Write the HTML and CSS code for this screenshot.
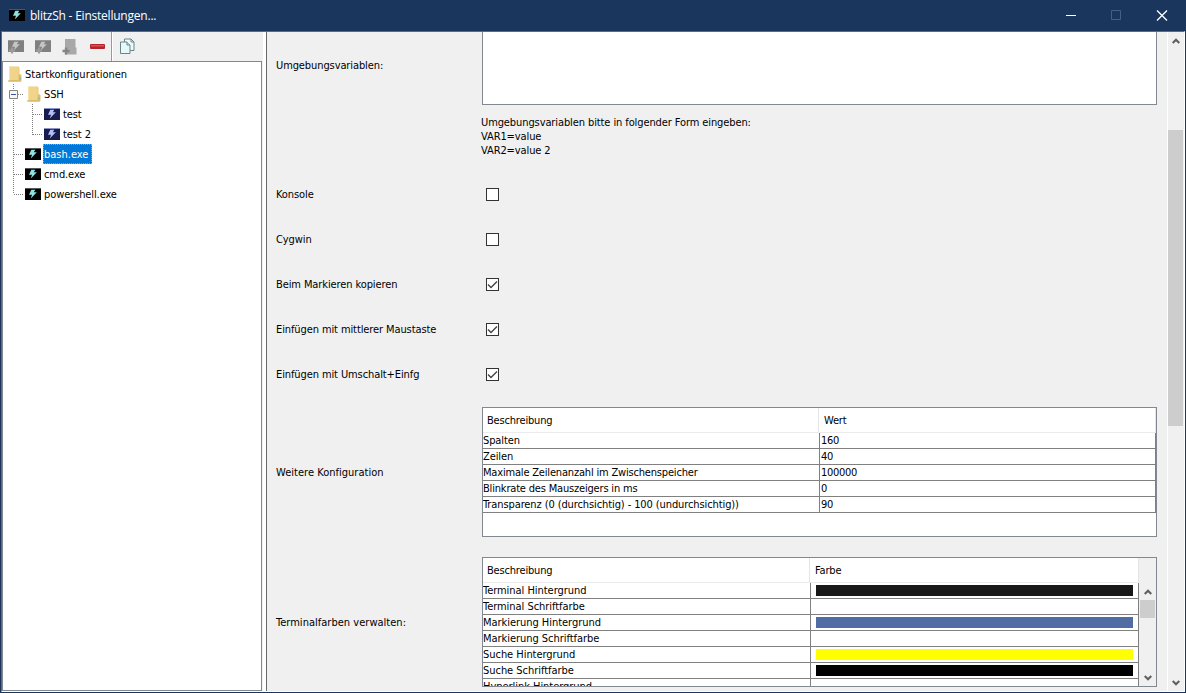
FILE: index.html
```html
<!DOCTYPE html>
<html lang="de">
<head>
<meta charset="utf-8">
<title>blitzSh - Einstellungen...</title>
<link rel="stylesheet" href="styles.css">
</head>
<body>
<svg class="defs" width="0" height="0">
  <symbol id="bolt" viewBox="0 0 16 12"><path d="M6.300 1.700h4L8.800 4.300h3L5.800 10.500l1.200-3.700H4z"/></symbol>
  <symbol id="term" viewBox="0 0 16 12"><rect width="16" height="12" fill="#000"/><rect width="16" height="1" fill="#555"/><use href="#bolt" width="16" height="12" fill="#8fe0e0"/></symbol>
  <symbol id="ssh" viewBox="0 0 16 12"><rect width="16" height="12" fill="#171c4c"/><rect width="16" height="1" fill="#8a94c8"/><use href="#bolt" width="16" height="12" fill="#b4c0f5"/></symbol>
  <symbol id="folder" viewBox="0 0 14 16"><path d="M1 .5h9.500l1 1V8l1.500 1v6.500H1z" fill="#e9c879"/><path d="M1 .5h1.500v14H1z" fill="#f7e2a9"/><path d="M3 1h7.500v13H3z" fill="#f0d48a"/><path d="M0 15.500h13V14.500H0z" fill="#d4ad55"/><path d="M10.500 9.500L12 8l1.500 1.500V15h-3z" fill="#dfbf70"/><path d="M11.500 11h1v3h-1z" fill="#55c7ea"/></symbol>
  <symbol id="addterm" viewBox="0 0 16 14"><rect width="16" height="12" fill="#808080"/><rect width="16" height="1" fill="#999"/><use href="#bolt" width="16" height="12" fill="#c5c5c5"/><path d="M4 7.500v6M1 10.500h6" stroke="#9c9c9c" stroke-width="2.200"/></symbol>
  <symbol id="up" viewBox="0 0 8 6"><path d="M.7 5L4 1.700 7.300 5" fill="none" stroke="#606060" stroke-width="2.200"/></symbol>
  <symbol id="down" viewBox="0 0 8 6"><path d="M.7 1L4 4.300 7.300 1" fill="none" stroke="#606060" stroke-width="2.200"/></symbol>
</svg>
<div class="window">
  <header class="titlebar">
    <svg class="appicon" width="16" height="12"><use href="#term"/></svg>
    <span class="title">blitzSh - Einstellungen...</span>
    <svg class="controls" width="102" height="11" viewBox="0 0 102 11" fill="none"><path d="M0 5.500h10" stroke="#fff"/><path d="M45.500 .5h9v9h-9z" stroke="#4a5f7e"/><path d="M91 .5l10 10M101 .5l-10 10" stroke="#fff" stroke-width="1.300"/></svg>
  </header>
  <div class="body">
    <aside class="side">
      <div class="toolbar">
        <svg width="16" height="14"><use href="#addterm"/></svg>
        <svg width="16" height="14"><use href="#addterm"/></svg>
        <svg width="16" height="16" viewBox="0 0 16 16"><path d="M3 0h10.500v8l1 1v6.500H3z" fill="#a8a8a8"/><path d="M4 8.500v7M.5 12h7" stroke="#858585" stroke-width="2.400"/></svg>
        <svg class="minus" width="15" height="5"><rect width="15" height="5" rx="1" fill="#b3262b"/><rect x="1" y="1" width="13" height="1.500" fill="#d85053"/></svg>
        <span class="sep"></span>
        <svg width="16" height="17" viewBox="0 0 16 17" stroke="#66858c"><path d="M5.500 1h6.500l3 3v8.500H5.500z" fill="#eefafa"/><path d="M12 1v3h3" fill="none"/><path d="M1.500 4H8l3 3v8.500H1.500z" fill="#e6f8f8"/><path d="M8 4v3h3" fill="#cfeaec"/></svg>
      </div>
      <div class="tree">
        <svg class="lines" width="34" height="132" viewBox="0 0 34 132" fill="none" stroke="#808080" stroke-dasharray="1 1"><path d="M5.500 0v110M10 10.500h5M24.500 20v31M25 30.500h9M25 50.500h9M6 70.500h9M6 90.500h9M6 110.500h9"/><path d="M1.500 6.500h8v8h-8z" fill="#f7f7f7" stroke="#848484" stroke-dasharray="none"/><path d="M3 10.500h5" stroke="#3c55a0" stroke-dasharray="none"/></svg>
        <div class="node root"><svg width="14" height="16"><use href="#folder"/></svg><span>Startkonfigurationen</span></div>
        <div class="node l1 dir"><svg width="14" height="16"><use href="#folder"/></svg><span>SSH</span></div>
        <div class="node l2"><svg width="16" height="12"><use href="#ssh"/></svg><span>test</span></div>
        <div class="node l2"><svg width="16" height="12"><use href="#ssh"/></svg><span>test 2</span></div>
        <div class="node l1"><svg width="16" height="12"><use href="#term"/></svg><span class="selected">bash.exe</span></div>
        <div class="node l1"><svg width="16" height="12"><use href="#term"/></svg><span>cmd.exe</span></div>
        <div class="node l1"><svg width="16" height="12"><use href="#term"/></svg><span>powershell.exe</span></div>
      </div>
    </aside>
    <main class="content">
      <div class="form">
        <label class="label first">Umgebungsvariablen:</label><div class="textarea"></div>
        <div class="help">Umgebungsvariablen bitte in folgender Form eingeben:<br>VAR1=value<br>VAR2=value 2</div>
        <label class="label">Konsole</label><span class="check"></span>
        <label class="label">Cygwin</label><span class="check"></span>
        <label class="label">Beim Markieren kopieren</label><span class="check"><svg width="11" height="11"><path d="M1 5.500L4 8.500 10 2.500" fill="none" stroke="#444" stroke-width="1.400"/></svg></span>
        <label class="label">Einfügen mit mittlerer Maustaste</label><span class="check"><svg width="11" height="11"><path d="M1 5.500L4 8.500 10 2.500" fill="none" stroke="#444" stroke-width="1.400"/></svg></span>
        <label class="label">Einfügen mit Umschalt+Einfg</label><span class="check"><svg width="11" height="11"><path d="M1 5.500L4 8.500 10 2.500" fill="none" stroke="#444" stroke-width="1.400"/></svg></span>
        <label class="label loose">Weitere Konfiguration</label>
        <div class="tablebox config">
          <div class="grid">
            <div class="head"><span>Beschreibung</span><span>Wert</span></div>
            <div class="row"><span>Spalten</span><span>160</span></div>
            <div class="row"><span>Zeilen</span><span>40</span></div>
            <div class="row"><span class="tight">Maximale Zeilenanzahl im Zwischenspeicher</span><span>100000</span></div>
            <div class="row"><span class="tight">Blinkrate des Mauszeigers in ms</span><span>0</span></div>
            <div class="row"><span>Transparenz (0 (durchsichtig) - 100 (undurchsichtig))</span><span>90</span></div>
          </div>
        </div>
        <label class="label loose">Terminalfarben verwalten:</label>
        <div class="tablebox colors">
          <div class="grid">
            <div class="head"><span>Beschreibung</span><span>Farbe</span></div>
            <div class="row"><span>Terminal Hintergrund</span><span><i class="swatch dark"></i></span></div>
            <div class="row"><span>Terminal Schriftfarbe</span><span></span></div>
            <div class="row"><span>Markierung Hintergrund</span><span><i class="swatch blue"></i></span></div>
            <div class="row"><span>Markierung Schriftfarbe</span><span></span></div>
            <div class="row"><span>Suche Hintergrund</span><span><i class="swatch yellow"></i></span></div>
            <div class="row"><span>Suche Schriftfarbe</span><span><i class="swatch black"></i></span></div>
            <div class="row"><span>Hyperlink Hintergrund</span><span></span></div>
          </div>
          <div class="innerbar"><svg width="8" height="6"><use href="#up"/></svg><div class="thumb"></div><svg class="end" width="8" height="6"><use href="#down"/></svg></div>
        </div>
      </div>
      <div class="mainbar"><svg width="8" height="6"><use href="#up"/></svg><div class="thumb"></div><svg class="end" width="8" height="6"><use href="#down"/></svg></div>
    </main>
  </div>
</div>
</body>
</html>
```
FILE: styles.css
```css
* { box-sizing: border-box; }
body { margin: 0; overflow: hidden; background: #1b365d; }
svg { display: block; flex: none; }
.defs { position: absolute; }
.window { width: 1186px; height: 693px; display: flex; flex-direction: column; padding: 0 1px 1px; font: 11px/14px "DejaVu Sans Condensed", "DejaVu Sans", sans-serif; font-stretch: condensed; letter-spacing: -0.1px; color: #000; white-space: nowrap; }
.titlebar { height: 31px; display: flex; align-items: center; padding: 0 17px 0 8px; color: #fff; }
.appicon { margin-bottom: 1px; }
.title { margin-left: 5px; font: 12px/16px "Open Sans", sans-serif; letter-spacing: -0.22px; }
.controls { margin-left: auto; }
.body { height: 661px; display: flex; background: #f0f0f0; border: 1px solid #fff; border-top-color: #696969; border-left-color: #696969; }
.side { width: 264px; border-right: 3px solid #fff; display: flex; flex-direction: column; }
.toolbar { height: 29px; display: flex; align-items: center; padding-left: 6px; gap: 11px; }
.minus { margin-left: 1px; }
.sep { width: 2px; height: 29px; background: #999; border-right: 1px solid #fff; margin: 0 -5px; }
.tree { position: relative; flex: 1; width: 260px; background: #fff; border: 1px solid #828790; padding-top: 2px; }
.lines { position: absolute; left: 5px; top: 22px; }
.node { height: 20px; display: flex; align-items: center; padding-left: 5px; }
.node span { height: 20px; line-height: 15px; margin-left: 2px; padding: 2px 3px 2px 0; border: 1px solid transparent; }
.root span { letter-spacing: 0; }
.l1 { padding-left: 22px; }
.l1.dir { padding-left: 24px; }
.l2 { padding-left: 41px; }
.node .selected { background: #0078d7; color: #fff; border: 1px dotted #ff8728; letter-spacing: 0; }
.content { flex: 1; border-left: 1px solid #696969; display: flex; }
.form { width: 900px; padding-left: 9px; overflow: hidden; display: grid; grid-template-columns: 206px 675px; grid-template-rows: 73px 67px repeat(5, 45px) 150px 150px; align-items: center; }
.label { margin-top: 1px; }
.label.first { margin: 0 0 5px; }
.loose { letter-spacing: 0.02px; }
.textarea { height: 73px; background: #fff; border: 1px solid #828790; border-top: 0; }
.help { grid-column: 2; align-self: start; margin: 11px 0 0 -1px; }
.check { width: 13px; height: 13px; margin-left: 4px; background: #fff; border: 1px solid #333; }
.tablebox { height: 130px; background: #fff; border: 1px solid #828790; display: flex; overflow: hidden; }
.grid { flex: 1; }
.head, .row { display: grid; grid-template-columns: 337px 1fr; }
.colors .head, .colors .row { grid-template-columns: 328px 1fr; }
.head { height: 25px; border-bottom: 1px solid #ebebeb; line-height: 26px; letter-spacing: -0.18px; }
.head span { border-right: 1px solid #e5e5e5; padding-left: 4px; height: 24px; }
.head span:first-child { width: 336px; }
.colors .head span:first-child { width: 327px; }
.row { height: 16px; border-bottom: 1px solid #808080; line-height: 15px; }
.row span { height: 16px; border-right: 1px solid #808080; padding-left: 1px; }
.row span:first-child { padding-left: 0; }
.row span:last-child { letter-spacing: -0.3px; }
.colors .row { letter-spacing: -0.04px; }
.tight { letter-spacing: -0.18px; }
.swatch { display: block; height: 11px; margin: 2px 5px 0 4px; }
.dark { background: #181818; }
.blue { background: #4f6ca5; }
.yellow { background: #ff0; }
.black { background: #000; }
.innerbar { width: 17px; background: #f0f0f0; display: flex; flex-direction: column; align-items: center; padding: 31px 1px 5px; }
.innerbar .thumb { width: 15px; height: 18px; margin-top: 5px; background: #cdcdcd; }
.mainbar { width: 17px; border-left: 1px solid #fff; display: flex; flex-direction: column; align-items: center; padding: 6px 1px 5px 0; }
.mainbar .thumb { width: 15px; height: 296px; margin-top: 86px; background: #cdcdcd; }
.end { margin-top: auto; }
```
